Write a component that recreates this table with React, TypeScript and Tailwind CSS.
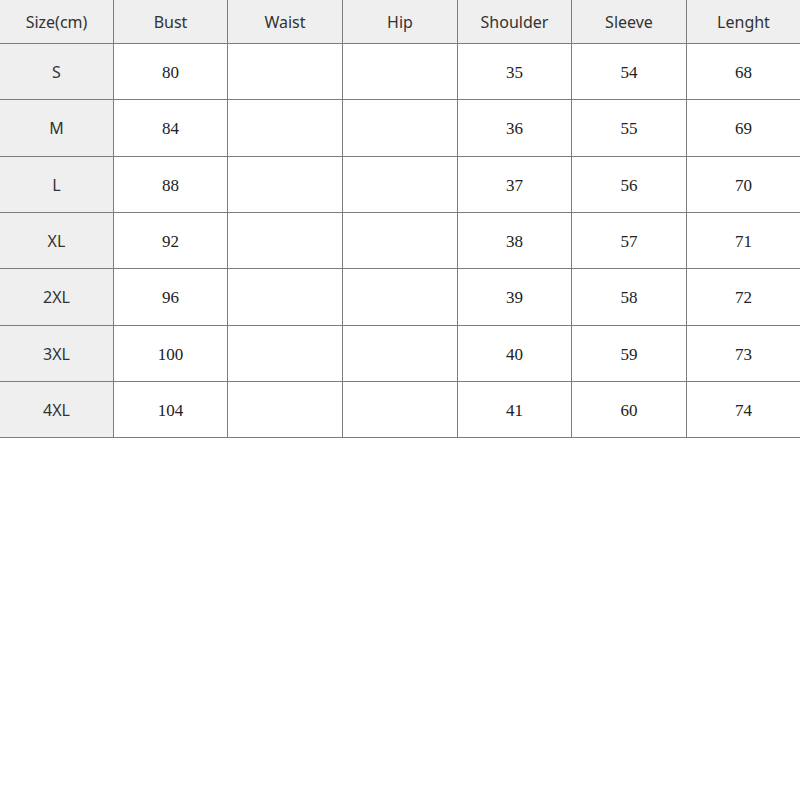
const headers = ["Size(cm)", "Bust", "Waist", "Hip", "Shoulder", "Sleeve", "Lenght"];

const rows = [
  ["S", "80", "", "", "35", "54", "68"],
  ["M", "84", "", "", "36", "55", "69"],
  ["L", "88", "", "", "37", "56", "70"],
  ["XL", "92", "", "", "38", "57", "71"],
  ["2XL", "96", "", "", "39", "58", "72"],
  ["3XL", "100", "", "", "40", "59", "73"],
  ["4XL", "104", "", "", "41", "60", "74"],
];

const rowHeights = ["h-[56px]", "h-[57px]", "h-[56px]", "h-[56px]", "h-[57px]", "h-[56px]", "h-[56px]"];

const sans = "font-['Noto_Sans','Open_Sans',sans-serif]";
const serif = "font-['Liberation_Serif','DejaVu_Serif',serif]";

const App = () => {
  return (
    <div className="w-[800px] h-[800px] bg-white">
      <div className="grid grid-cols-[114px_114px_115px_115px_114px_115px_113px]">
        {headers.map((h, i) => (
          <div
            key={h}
            className={`h-[44px] flex items-center justify-center bg-[#efefef] border-b border-[#7d7d7d] text-[16px] text-[#333] ${sans} ${
              i < 6 ? "border-r" : ""
            }`}
          >
            {h}
          </div>
        ))}
        {rows.map((row, r) =>
          row.map((cell, c) => (
            <div
              key={`${r}-${c}`}
              className={`${rowHeights[r]} flex items-center justify-center border-b border-[#7d7d7d] ${
                c < 6 ? "border-r" : ""
              } ${
                c === 0
                  ? `bg-[#efefef] text-[16px] text-[#333] ${sans}`
                  : `bg-white text-[17px] text-[#222] pt-[2px] ${serif}`
              }`}
            >
              {cell}
            </div>
          ))
        )}
      </div>
    </div>
  );
};

export default App;
